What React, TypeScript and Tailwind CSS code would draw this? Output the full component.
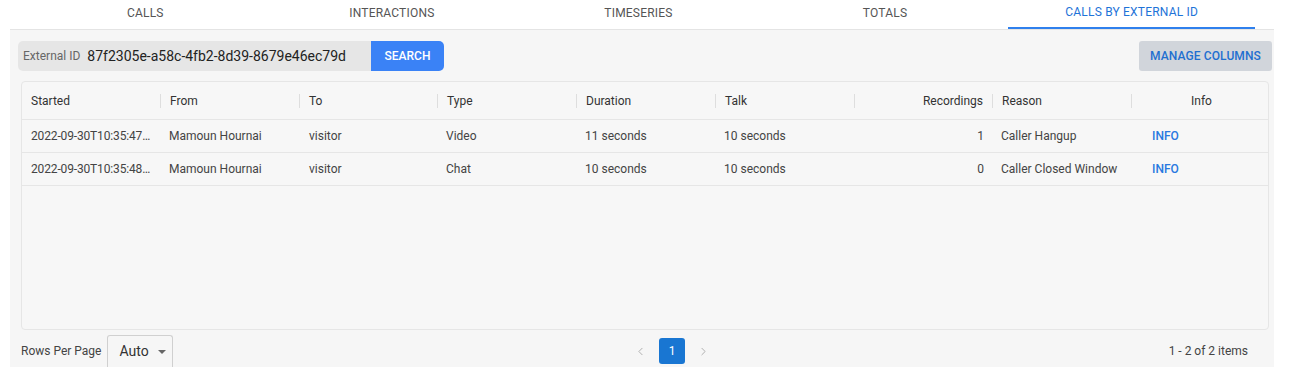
import { ChevronLeft, ChevronRight } from "lucide-react";

const tabs = ["CALLS", "INTERACTIONS", "TIMESERIES", "TOTALS", "CALLS BY EXTERNAL ID"];

type Col = { key: string; label: string; align?: "right" | "center" };

const columns: Col[] = [
  { key: "started", label: "Started" },
  { key: "from", label: "From" },
  { key: "to", label: "To" },
  { key: "type", label: "Type" },
  { key: "duration", label: "Duration" },
  { key: "talk", label: "Talk" },
  { key: "recordings", label: "Recordings", align: "right" },
  { key: "reason", label: "Reason" },
  { key: "info", label: "Info", align: "center" },
];

const rows = [
  {
    started: "2022-09-30T10:35:47…",
    from: "Mamoun Hournai",
    to: "visitor",
    type: "Video",
    duration: "11 seconds",
    talk: "10 seconds",
    recordings: "1",
    reason: "Caller Hangup",
  },
  {
    started: "2022-09-30T10:35:48…",
    from: "Mamoun Hournai",
    to: "visitor",
    type: "Chat",
    duration: "10 seconds",
    talk: "10 seconds",
    recordings: "0",
    reason: "Caller Closed Window",
  },
];

const gridCols = "grid-cols-[139px_139px_138px_139px_139px_139px_138px_139px_1fr]";

function Separator() {
  return <span className="h-[14px] w-px bg-[#dedede]" />;
}

export default function App() {
  return (
    <div className="h-[391px] w-[1291px] bg-white font-['Roboto',sans-serif]">
      <div className="ml-[10px] w-[1264px]">
        <div className="flex h-[30px] border-b border-[#e4e4e4] bg-white pl-[12px] pr-[19px]">
          {tabs.map((tab, i) => {
            const active = i === tabs.length - 1;
            return (
              <div
                key={tab}
                className={`flex flex-1 items-center justify-center pb-[3px] text-[12px] tracking-[0.2px] ${
                  active ? "border-b-2 border-[#2f80ed] text-[#1e73d8]" : "text-[#555]"
                }`}
              >
                {tab}
              </div>
            );
          })}
        </div>

        <div className="bg-[#f6f6f6] pt-[11px]">
          <div className="flex items-center justify-between pl-[8px] pr-[2px]">
            <div className="flex h-[30px]">
              <div className="flex w-[353px] items-center rounded-l-[5px] bg-[#e6e6e6] pl-[5px]">
                <span className="text-[12px] text-[#666]">External ID</span>
                <span className="ml-[7px] text-[14px] text-[#222]">87f2305e-a58c-4fb2-8d39-8679e46ec79d</span>
              </div>
              <button
                type="button"
                className="w-[73px] rounded-r-[5px] bg-[#3a82f6] text-[12px] font-medium text-white"
              >
                SEARCH
              </button>
            </div>
            <button
              type="button"
              className="h-[30px] w-[133px] rounded-[3px] bg-[#d1d5db] text-[12px] font-medium tracking-[0.1px] text-[#1f6fd0]"
            >
              MANAGE COLUMNS
            </button>
          </div>

          <div className="ml-[11px] mr-[5px] mt-[10px] h-[249px] rounded-[4px] border border-[#e6e6e6] bg-[#f7f7f7]">
            <div className={`grid h-[38px] ${gridCols} border-b border-[#e6e6e6]`}>
              {columns.map((col, i) => (
                <div key={col.key} className="flex items-center">
                  <span
                    className={`flex-1 px-[9px] text-[12px] text-[#333] ${
                      col.align === "right" ? "text-right" : col.align === "center" ? "pl-[12px] text-center" : ""
                    }`}
                  >
                    {col.label}
                  </span>
                  {i < columns.length - 1 && <Separator />}
                </div>
              ))}
            </div>
            {rows.map((row) => (
              <div
                key={row.started}
                className={`grid h-[33px] ${gridCols} items-center border-b border-[#e6e6e6] text-[12px] text-[#444]`}
              >
                <span className="overflow-hidden whitespace-nowrap pl-[9px] tracking-[-0.15px]">{row.started}</span>
                <span className="px-[8px]">{row.from}</span>
                <span className="px-[9px]">{row.to}</span>
                <span className="px-[8px]">{row.type}</span>
                <span className="px-[8px]">{row.duration}</span>
                <span className="px-[8px]">{row.talk}</span>
                <span className="px-[9px] text-right">{row.recordings}</span>
                <span className="px-[8px]">{row.reason}</span>
                <span className="px-[20px] font-medium text-[#2979e0]">INFO</span>
              </div>
            ))}
          </div>

          <div className="mt-[5px] flex h-[32px] items-center pl-[11px] pr-[26px]">
            <div className="flex h-full w-[613px] items-center">
              <span className="text-[12px] text-[#444]">Rows Per Page</span>
              <div className="ml-[6px] flex h-full w-[66px] items-center rounded-t-[3px] border border-b-0 border-[#d0d0d0] pl-[11px] text-[14px] text-[#333]">
                Auto
                <span className="ml-[9px] h-0 w-0 border-l-[4px] border-r-[4px] border-t-[4px] border-l-transparent border-r-transparent border-t-[#666]" />
              </div>
            </div>
            <div className="flex items-center gap-[12px]">
              <ChevronLeft size={13} strokeWidth={1.5} className="text-[#a0a0a0]" />
              <span className="flex h-[26px] w-[26px] items-center justify-center rounded-[3px] bg-[#1976d2] text-[12px] text-white">
                1
              </span>
              <ChevronRight size={13} strokeWidth={1.5} className="text-[#a0a0a0]" />
            </div>
            <div className="flex flex-1 justify-end text-[12px] text-[#444]">1 - 2 of 2 items</div>
          </div>
        </div>
      </div>
    </div>
  );
}
